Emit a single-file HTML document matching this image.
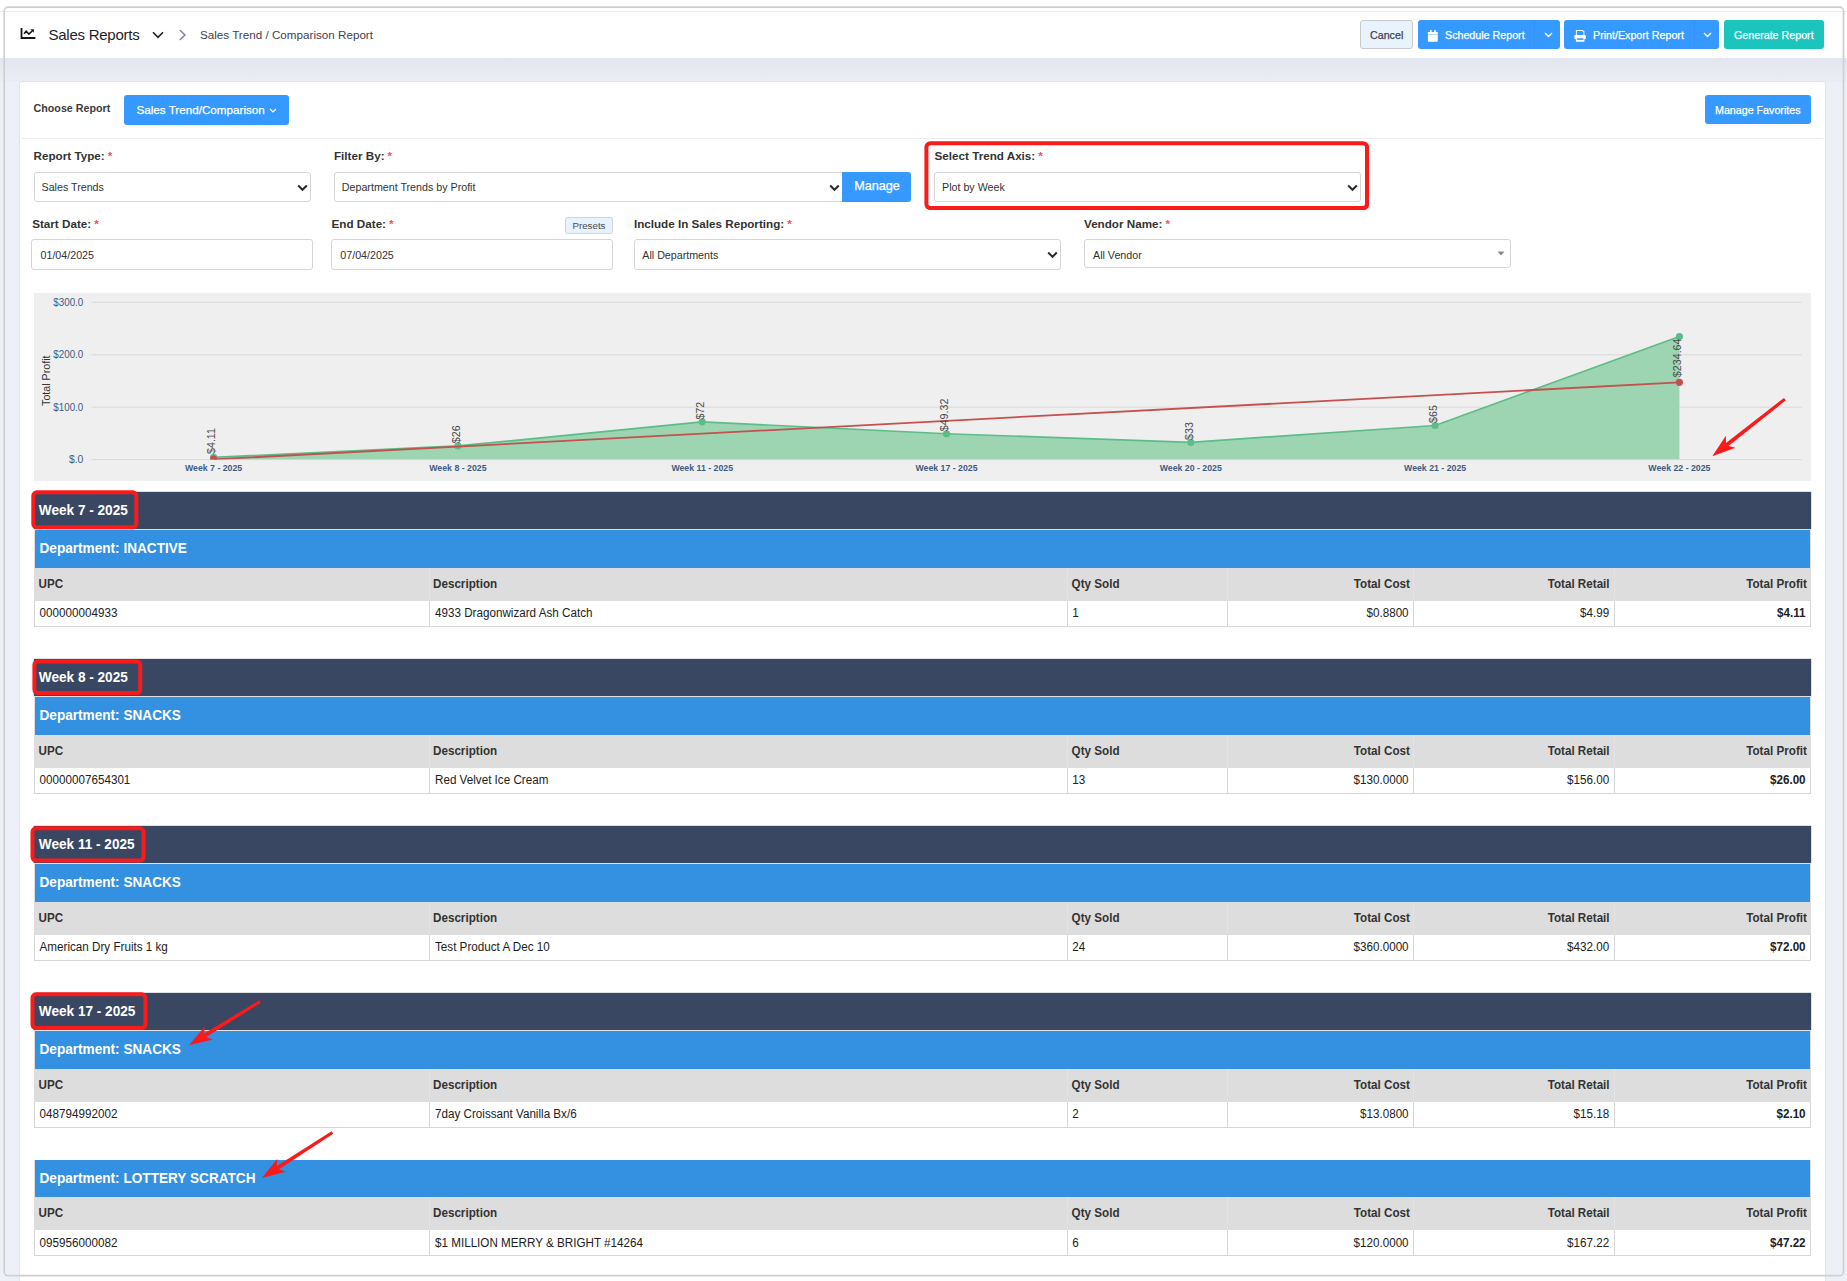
<!DOCTYPE html>
<html><head><meta charset="utf-8">
<style>
*{box-sizing:border-box;margin:0;padding:0}
html,body{width:1847px;height:1281px;overflow:hidden;background:#fff;font-family:"Liberation Sans",sans-serif;color:#3F4254}
.a{position:absolute}
.t{position:absolute;white-space:nowrap;line-height:1}
#topline{left:0;top:11px;width:1847px;height:1px;background:#E9EBF1}
#bg{left:0;top:58px;width:1847px;height:1223px;background:#EEF0F8}
#bgshade{left:0;top:58px;width:1847px;height:24px;background:linear-gradient(#E4E6EF,#EBEDF5)}
#card{left:19px;top:81px;width:1807px;height:1210px;background:#fff;border:1px solid #E2E4EA;border-radius:3px}
#frame{left:4px;top:7px;width:1840px;height:1270px;border:2px solid #D2D0D0;border-radius:3px}
.btn{position:absolute;border-radius:3px;color:#fff;font-size:10.69px;white-space:nowrap;line-height:1;-webkit-text-stroke:0.25px currentColor}
.lbl{position:absolute;white-space:nowrap;font-size:11.66px;font-weight:700;color:#333;line-height:1}
.lbl b{color:#F64E60;font-weight:700;margin-left:3px}
.inp{position:absolute;border:1px solid #D5D5D5;border-radius:3px;background:#fff;font-size:10.69px;color:#333;white-space:nowrap;line-height:1}
.inp span{position:absolute;left:7px;top:10px}
.chev{position:absolute;width:12px;height:8px}
</style></head><body>
<div class="a" id="topline"></div>
<div class="a" id="bg"></div>
<div class="a" id="bgshade"></div>
<div class="a" id="card"></div>

<!-- header -->
<svg class="a" style="left:19px;top:27px" width="18" height="13" viewBox="0 0 18 13">
 <path d="M2.5 1 V11 H16.4" fill="none" stroke="#151515" stroke-width="1.8"/>
 <path d="M5.1 6.7 L7.1 4.3 L9.9 7.1 L13.2 4" fill="none" stroke="#151515" stroke-width="1.6"/>
 <path d="M11.3 2.2 H14.9 V5.8 Z" fill="#151515"/>
</svg>
<div class="t" style="left:48.5px;top:26.5px;font-size:15px;letter-spacing:-0.25px;color:#1E1E2D">Sales Reports</div>
<svg class="a" style="left:152px;top:31px" width="12" height="8" viewBox="0 0 12 8"><path d="M1 1.2 L6 6.3 L11 1.2" fill="none" stroke="#1E1E2D" stroke-width="1.6"/></svg>
<svg class="a" style="left:178px;top:29px" width="9" height="12" viewBox="0 0 9 12"><path d="M1.8 1 L7 6 L1.8 11" fill="none" stroke="#7E8299" stroke-width="1.4"/></svg>
<div class="t" style="left:200px;top:28.5px;font-size:11.66px;color:#3F4254">Sales Trend / Comparison Report</div>

<div class="btn" style="left:1360px;top:20px;width:53px;height:29px;background:#E8F3FD;border:1px solid #C9C9C9;color:#3F4254"><span class="t" style="left:9px;top:9px">Cancel</span></div>
<div class="btn" style="left:1418px;top:20px;width:142px;height:29px;background:#3699FF">
 <svg class="a" style="left:9px;top:10px" width="12" height="12" viewBox="0 0 12 12"><rect x="3" y="0.1" width="1.6" height="2.5" fill="#fff"/><rect x="7.2" y="0.1" width="1.6" height="2.5" fill="#fff"/><rect x="0.9" y="1.9" width="9.9" height="2.2" rx="0.6" fill="#fff"/><rect x="0.9" y="4.1" width="9.9" height="0.8" fill="#E6EFFB"/><path d="M0.9 4.9 H10.8 V10.8 Q10.8 11.8 9.8 11.8 H1.9 Q0.9 11.8 0.9 10.8 Z" fill="#fff"/></svg>
 <span class="t" style="left:27px;top:9.5px">Schedule Report</span>
 <div class="a" style="left:116px;top:0;width:1px;height:29px;background:#3492F5"></div>
 <svg class="a" style="left:126px;top:12px" width="9" height="6" viewBox="0 0 9 6"><path d="M1 1 L4.5 4.5 L8 1" fill="none" stroke="#fff" stroke-width="1.5"/></svg>
</div>
<div class="btn" style="left:1564px;top:20px;width:155px;height:29px;background:#3699FF">
 <svg class="a" style="left:10px;top:10px" width="12" height="12" viewBox="0 0 12 12"><path d="M1.9 0.1 H8.9 L10.4 1.6 V5 H1.9 Z" fill="#fff"/><path d="M2.85 1.05 H8.4 L9.45 2.1 V5 H2.85 Z" fill="#3699FF"/><rect x="0.3" y="5" width="11.5" height="4.2" rx="1.3" fill="#fff"/><rect x="1.9" y="7.8" width="8.5" height="4" rx="0.5" fill="#fff"/><rect x="2.85" y="8.3" width="6.6" height="1.6" fill="#3699FF"/></svg>
 <span class="t" style="left:29px;top:9.5px">Print/Export Report</span>
 <div class="a" style="left:130px;top:0;width:1px;height:29px;background:#3492F5"></div>
 <svg class="a" style="left:139px;top:12px" width="9" height="6" viewBox="0 0 9 6"><path d="M1 1 L4.5 4.5 L8 1" fill="none" stroke="#fff" stroke-width="1.5"/></svg>
</div>
<div class="btn" style="left:1724px;top:20px;width:100px;height:29px;background:#1BC5BD"><span class="t" style="left:10px;top:9.5px">Generate Report</span></div>

<!-- card header -->
<div class="t" style="left:33.6px;top:102.5px;font-size:10.69px;font-weight:700;color:#3A3A3A">Choose Report</div>
<div class="btn" style="left:124px;top:95px;width:165px;height:29.5px;background:#3699FF;font-size:11.66px">
 <span class="t" style="left:12.5px;top:9px">Sales Trend/Comparison</span>
 <svg class="a" style="left:145px;top:12.5px" width="8" height="5" viewBox="0 0 8 5"><path d="M1 1 L4 4 L7 1" fill="none" stroke="#fff" stroke-width="1.2"/></svg>
</div>
<div class="btn" style="left:1705px;top:95px;width:106px;height:28.5px;background:#3699FF"><span class="t" style="left:10px;top:9.5px">Manage Favorites</span></div>
<div class="a" style="left:22px;top:138px;width:1801px;height:1px;background:#EBEDF3"></div>

<!-- FORM -->
<div class="lbl" style="left:33.6px;top:149.9px">Report Type:<b>*</b></div>
<div class="inp" style="left:34px;top:172px;width:277px;height:30px"><span style="left:6.5px;top:9.3px">Sales Trends</span>
 <svg class="a" style="left:262px;top:11px" width="11" height="8" viewBox="0 0 11 8"><path d="M1.2 1.5 L5.5 5.8 L9.8 1.5" fill="none" stroke="#2B2B2B" stroke-width="2"/></svg></div>
<div class="lbl" style="left:334px;top:149.9px">Filter By:<b>*</b></div>
<div class="inp" style="left:334px;top:172px;width:509px;height:30px;border-radius:3px 0 0 3px"><span style="left:6.8px;top:9.3px">Department Trends by Profit</span>
 <svg class="a" style="left:494px;top:11px" width="11" height="8" viewBox="0 0 11 8"><path d="M1.2 1.5 L5.5 5.8 L9.8 1.5" fill="none" stroke="#2B2B2B" stroke-width="2"/></svg></div>
<div class="btn" style="left:842px;top:172px;width:69px;height:30px;background:#3699FF;border-radius:0 3px 3px 0;font-size:12.64px"><span class="t" style="left:12.2px;top:7.9px">Manage</span></div>

<div class="lbl" style="left:934.6px;top:149.9px">Select Trend Axis:<b>*</b></div>
<div class="inp" style="left:934px;top:172px;width:427px;height:30px"><span style="left:7px;top:9.3px">Plot by Week</span>
 <svg class="a" style="left:412px;top:11px" width="11" height="8" viewBox="0 0 11 8"><path d="M1.2 1.5 L5.5 5.8 L9.8 1.5" fill="none" stroke="#2B2B2B" stroke-width="2"/></svg></div>
<div class="a" style="left:925px;top:142px;width:444px;height:68px;border:3px solid #F01E23;border-radius:5px"></div>

<div class="lbl" style="left:32.2px;top:218.2px">Start Date:<b>*</b></div>
<div class="inp" style="left:31px;top:239.2px;width:282px;height:30.5px"><span style="left:8.5px;top:9.5px">01/04/2025</span></div>
<div class="lbl" style="left:331.6px;top:218.2px">End Date:<b>*</b></div>
<div class="a" style="left:565px;top:217px;width:48px;height:16.5px;background:#E7F2FC;border:1px solid #D3D3D3;border-radius:2.5px"><span class="t" style="left:6.5px;top:2.9px;font-size:9.72px;color:#4A4A4A">Presets</span></div>
<div class="inp" style="left:331px;top:239.2px;width:282px;height:30.5px"><span style="left:8.3px;top:9.5px">07/04/2025</span></div>
<div class="lbl" style="left:633.9px;top:218.2px">Include In Sales Reporting:<b>*</b></div>
<div class="inp" style="left:634px;top:239.2px;width:427px;height:30.5px"><span style="left:7.3px;top:9.5px">All Departments</span>
 <svg class="a" style="left:412px;top:11px" width="11" height="8" viewBox="0 0 11 8"><path d="M1.2 1.5 L5.5 5.8 L9.8 1.5" fill="none" stroke="#2B2B2B" stroke-width="2"/></svg></div>
<div class="lbl" style="left:1084px;top:218.2px">Vendor Name:<b>*</b></div>
<div class="inp" style="left:1084px;top:239.2px;width:427px;height:29px"><span style="left:8px;top:9.5px">All Vendor</span>
 <svg class="a" style="left:412px;top:11px" width="8" height="5" viewBox="0 0 8 5"><path d="M0.5 0.5 H7.5 L4 4.5 Z" fill="#888"/></svg></div>


<!-- CHART -->
<svg class="a" style="left:0;top:0" width="1847" height="1281" viewBox="0 0 1847 1281">
<defs><clipPath id="pc"><rect x="91.6" y="293" width="1710" height="166.6"/></clipPath></defs>
<rect x="34" y="293" width="1777" height="188" fill="#EFEFEF"/>
<rect x="91.6" y="459.10" width="1710" height="1" fill="#D9D9D9"/>
<text x="83.3" y="463.20" text-anchor="end" font-size="10.6" textLength="14.4" lengthAdjust="spacingAndGlyphs" fill="#3E5C85" font-family="Liberation Sans">$.0</text>
<rect x="91.6" y="406.67" width="1710" height="1" fill="#D9D9D9"/>
<text x="83.3" y="410.77" text-anchor="end" font-size="10.6" textLength="30" lengthAdjust="spacingAndGlyphs" fill="#3E5C85" font-family="Liberation Sans">$100.0</text>
<rect x="91.6" y="354.23" width="1710" height="1" fill="#D9D9D9"/>
<text x="83.3" y="358.33" text-anchor="end" font-size="10.6" textLength="30" lengthAdjust="spacingAndGlyphs" fill="#3E5C85" font-family="Liberation Sans">$200.0</text>
<rect x="91.6" y="301.80" width="1710" height="1" fill="#D9D9D9"/>
<text x="83.3" y="305.90" text-anchor="end" font-size="10.6" textLength="30" lengthAdjust="spacingAndGlyphs" fill="#3E5C85" font-family="Liberation Sans">$300.0</text>
<text transform="translate(50,380.7) rotate(-90)" text-anchor="middle" font-size="10.69" fill="#333" font-family="Liberation Sans">Total Profit</text>
<g clip-path="url(#pc)"><polygon points="213.6,459.6 213.6,457.44 457.9,445.97 702.2,421.85 946.5,433.74 1190.8,442.30 1435.1,425.52 1679.4,336.57 1679.4,459.6" fill="#9DD5B3"/>
<polyline points="213.6,457.44 457.9,445.97 702.2,421.85 946.5,433.74 1190.8,442.30 1435.1,425.52 1679.4,336.57" fill="none" stroke="#5CBD88" stroke-width="1.7"/>
<circle cx="213.6" cy="457.44" r="3.6" fill="#5CBD88"/>
<circle cx="457.9" cy="445.97" r="3.6" fill="#5CBD88"/>
<circle cx="702.2" cy="421.85" r="3.6" fill="#5CBD88"/>
<circle cx="946.5" cy="433.74" r="3.6" fill="#5CBD88"/>
<circle cx="1190.8" cy="442.30" r="3.6" fill="#5CBD88"/>
<circle cx="1435.1" cy="425.52" r="3.6" fill="#5CBD88"/>
<circle cx="1679.4" cy="336.57" r="3.6" fill="#5CBD88"/>
<line x1="213.6" y1="459.4" x2="1679.4" y2="382.3" stroke="#C4504F" stroke-width="1.8"/>
<circle cx="213.6" cy="459" r="3.6" fill="#C4504F"/>
<circle cx="1679.4" cy="382.3" r="3.6" fill="#C4504F"/></g>
<text x="213.6" y="471" text-anchor="middle" font-size="8.75" font-weight="700" fill="#3E5C85" font-family="Liberation Sans">Week 7 - 2025</text>
<text x="457.9" y="471" text-anchor="middle" font-size="8.75" font-weight="700" fill="#3E5C85" font-family="Liberation Sans">Week 8 - 2025</text>
<text x="702.2" y="471" text-anchor="middle" font-size="8.75" font-weight="700" fill="#3E5C85" font-family="Liberation Sans">Week 11 - 2025</text>
<text x="946.5" y="471" text-anchor="middle" font-size="8.75" font-weight="700" fill="#3E5C85" font-family="Liberation Sans">Week 17 - 2025</text>
<text x="1190.8" y="471" text-anchor="middle" font-size="8.75" font-weight="700" fill="#3E5C85" font-family="Liberation Sans">Week 20 - 2025</text>
<text x="1435.1" y="471" text-anchor="middle" font-size="8.75" font-weight="700" fill="#3E5C85" font-family="Liberation Sans">Week 21 - 2025</text>
<text x="1679.4" y="471" text-anchor="middle" font-size="8.75" font-weight="700" fill="#3E5C85" font-family="Liberation Sans">Week 22 - 2025</text>
<text transform="translate(215.4,454) rotate(-90)" text-anchor="start" font-size="10.69" fill="#4A4A4A" font-family="Liberation Sans">$4.11</text>
<text transform="translate(459.7,443.2) rotate(-90)" text-anchor="start" font-size="10.69" fill="#4A4A4A" font-family="Liberation Sans">$26</text>
<text transform="translate(704.0,419.6) rotate(-90)" text-anchor="start" font-size="10.69" fill="#4A4A4A" font-family="Liberation Sans">$72</text>
<text transform="translate(948.3,431.3) rotate(-90)" text-anchor="start" font-size="10.69" fill="#4A4A4A" font-family="Liberation Sans">$49.32</text>
<text transform="translate(1192.6,440) rotate(-90)" text-anchor="start" font-size="10.69" fill="#4A4A4A" font-family="Liberation Sans">$33</text>
<text transform="translate(1436.9,423) rotate(-90)" text-anchor="start" font-size="10.69" fill="#4A4A4A" font-family="Liberation Sans">$65</text>
<text transform="translate(1681.2,338.5) rotate(-90)" text-anchor="end" font-size="10.69" fill="#4A4A4A" font-family="Liberation Sans">$234.64</text>
</svg>

<style>
.week{position:absolute;left:34px;width:1777px;background:#3A4763;box-shadow:0 0 0 0.6px #C9CCD3}
.week .t{font-size:13.61px;font-weight:700;color:#fff;transform:scaleY(1.08);transform-origin:0 85%}
.dept{position:absolute;left:34px;width:1777px;background:#3490E0;border-left:1px solid #E2DDD8;border-right:1px solid #E2DDD8}
.dept .t{font-size:13.61px;font-weight:700;color:#fff;transform:scaleY(1.08);transform-origin:0 85%}
.colh{position:absolute;left:34px;width:1777px;background:#DDDDDD}
.colh .t{font-size:11.66px;font-weight:700;color:#333;transform:scaleY(1.1);transform-origin:0 85%}
.colh .t,.row .t{left:auto}
.row{position:absolute;left:34px;width:1777px;background:#fff;border:1px solid #D6D6D6;border-top:0}
.row .t{font-size:11.66px;color:#222;transform:scaleY(1.1);transform-origin:0 85%}
.row i{position:absolute;top:0;width:1px;height:100%;background:#D6D6D6}
.colh i{position:absolute;top:0;width:1px;height:100%;background:#E3E3E3}
</style>
<div class="week" style="top:492px;height:37.2px"><span class="t" style="left:4.8px;top:12.18px">Week 7 - 2025</span></div>
<div class="dept" style="top:530.20px;height:37.6px"><span class="t" style="left:4.5px;top:12.28px">Department: INACTIVE</span></div>
<div class="colh" style="top:567.80px;height:32.9px"><span class="t" style="left:4.5px;top:9.83px">UPC</span><span class="t" style="left:399px;top:9.83px">Description</span><span class="t" style="left:1037.6px;top:9.83px">Qty Sold</span><span class="t" style="right:401.1px;top:9.83px">Total Cost</span><span class="t" style="right:201.4px;top:9.83px">Total Retail</span><span class="t" style="right:4.1px;top:9.83px">Total Profit</span><i style="left:395.3px"></i><i style="left:1033.3px"></i><i style="left:1193.3px"></i><i style="left:1379.3px"></i><i style="left:1580.4px"></i></div>
<div class="row" style="top:600.70px;height:26.2px"><span class="t" style="left:4.6px;top:6.43px">000000004933</span><span class="t" style="left:400.0px;top:6.43px">4933 Dragonwizard Ash Catch</span><span class="t" style="left:1037.3px;top:6.43px">1</span><span class="t" style="right:401.4px;top:6.43px">$0.8800</span><span class="t" style="right:200.8px;top:6.43px">$4.99</span><span class="t" style="right:4.4px;top:6.43px;font-weight:700">$4.11</span><i style="left:394.3px"></i><i style="left:1032.3px"></i><i style="left:1192.3px"></i><i style="left:1378.3px"></i><i style="left:1579.4px"></i></div>
<div class="week" style="top:659px;height:37.2px"><span class="t" style="left:4.8px;top:12.18px">Week 8 - 2025</span></div>
<div class="dept" style="top:697.20px;height:37.6px"><span class="t" style="left:4.5px;top:12.28px">Department: SNACKS</span></div>
<div class="colh" style="top:734.80px;height:32.9px"><span class="t" style="left:4.5px;top:9.83px">UPC</span><span class="t" style="left:399px;top:9.83px">Description</span><span class="t" style="left:1037.6px;top:9.83px">Qty Sold</span><span class="t" style="right:401.1px;top:9.83px">Total Cost</span><span class="t" style="right:201.4px;top:9.83px">Total Retail</span><span class="t" style="right:4.1px;top:9.83px">Total Profit</span><i style="left:395.3px"></i><i style="left:1033.3px"></i><i style="left:1193.3px"></i><i style="left:1379.3px"></i><i style="left:1580.4px"></i></div>
<div class="row" style="top:767.70px;height:26.2px"><span class="t" style="left:4.6px;top:6.43px">00000007654301</span><span class="t" style="left:400.0px;top:6.43px">Red Velvet Ice Cream</span><span class="t" style="left:1037.3px;top:6.43px">13</span><span class="t" style="right:401.4px;top:6.43px">$130.0000</span><span class="t" style="right:200.8px;top:6.43px">$156.00</span><span class="t" style="right:4.4px;top:6.43px;font-weight:700">$26.00</span><i style="left:394.3px"></i><i style="left:1032.3px"></i><i style="left:1192.3px"></i><i style="left:1378.3px"></i><i style="left:1579.4px"></i></div>
<div class="week" style="top:826px;height:37.2px"><span class="t" style="left:4.8px;top:12.18px">Week 11 - 2025</span></div>
<div class="dept" style="top:864.20px;height:37.6px"><span class="t" style="left:4.5px;top:12.28px">Department: SNACKS</span></div>
<div class="colh" style="top:901.80px;height:32.9px"><span class="t" style="left:4.5px;top:9.83px">UPC</span><span class="t" style="left:399px;top:9.83px">Description</span><span class="t" style="left:1037.6px;top:9.83px">Qty Sold</span><span class="t" style="right:401.1px;top:9.83px">Total Cost</span><span class="t" style="right:201.4px;top:9.83px">Total Retail</span><span class="t" style="right:4.1px;top:9.83px">Total Profit</span><i style="left:395.3px"></i><i style="left:1033.3px"></i><i style="left:1193.3px"></i><i style="left:1379.3px"></i><i style="left:1580.4px"></i></div>
<div class="row" style="top:934.70px;height:26.2px"><span class="t" style="left:4.6px;top:6.43px">American Dry Fruits 1 kg</span><span class="t" style="left:400.0px;top:6.43px">Test Product A Dec 10</span><span class="t" style="left:1037.3px;top:6.43px">24</span><span class="t" style="right:401.4px;top:6.43px">$360.0000</span><span class="t" style="right:200.8px;top:6.43px">$432.00</span><span class="t" style="right:4.4px;top:6.43px;font-weight:700">$72.00</span><i style="left:394.3px"></i><i style="left:1032.3px"></i><i style="left:1192.3px"></i><i style="left:1378.3px"></i><i style="left:1579.4px"></i></div>
<div class="week" style="top:993px;height:37.2px"><span class="t" style="left:4.8px;top:12.18px">Week 17 - 2025</span></div>
<div class="dept" style="top:1031.20px;height:37.6px"><span class="t" style="left:4.5px;top:12.28px">Department: SNACKS</span></div>
<div class="colh" style="top:1068.80px;height:32.9px"><span class="t" style="left:4.5px;top:9.83px">UPC</span><span class="t" style="left:399px;top:9.83px">Description</span><span class="t" style="left:1037.6px;top:9.83px">Qty Sold</span><span class="t" style="right:401.1px;top:9.83px">Total Cost</span><span class="t" style="right:201.4px;top:9.83px">Total Retail</span><span class="t" style="right:4.1px;top:9.83px">Total Profit</span><i style="left:395.3px"></i><i style="left:1033.3px"></i><i style="left:1193.3px"></i><i style="left:1379.3px"></i><i style="left:1580.4px"></i></div>
<div class="row" style="top:1101.70px;height:26.2px"><span class="t" style="left:4.6px;top:6.43px">048794992002</span><span class="t" style="left:400.0px;top:6.43px">7day Croissant Vanilla Bx/6</span><span class="t" style="left:1037.3px;top:6.43px">2</span><span class="t" style="right:401.4px;top:6.43px">$13.0800</span><span class="t" style="right:200.8px;top:6.43px">$15.18</span><span class="t" style="right:4.4px;top:6.43px;font-weight:700">$2.10</span><i style="left:394.3px"></i><i style="left:1032.3px"></i><i style="left:1192.3px"></i><i style="left:1378.3px"></i><i style="left:1579.4px"></i></div>
<div class="dept" style="top:1159.80px;height:37.6px"><span class="t" style="left:4.5px;top:12.28px">Department: LOTTERY SCRATCH</span></div>
<div class="colh" style="top:1197.40px;height:32.9px"><span class="t" style="left:4.5px;top:9.83px">UPC</span><span class="t" style="left:399px;top:9.83px">Description</span><span class="t" style="left:1037.6px;top:9.83px">Qty Sold</span><span class="t" style="right:401.1px;top:9.83px">Total Cost</span><span class="t" style="right:201.4px;top:9.83px">Total Retail</span><span class="t" style="right:4.1px;top:9.83px">Total Profit</span><i style="left:395.3px"></i><i style="left:1033.3px"></i><i style="left:1193.3px"></i><i style="left:1379.3px"></i><i style="left:1580.4px"></i></div>
<div class="row" style="top:1230.30px;height:26.2px"><span class="t" style="left:4.6px;top:6.43px">095956000082</span><span class="t" style="left:400.0px;top:6.43px">$1 MILLION MERRY &amp; BRIGHT #14264</span><span class="t" style="left:1037.3px;top:6.43px">6</span><span class="t" style="right:401.4px;top:6.43px">$120.0000</span><span class="t" style="right:200.8px;top:6.43px">$167.22</span><span class="t" style="right:4.4px;top:6.43px;font-weight:700">$47.22</span><i style="left:394.3px"></i><i style="left:1032.3px"></i><i style="left:1192.3px"></i><i style="left:1378.3px"></i><i style="left:1579.4px"></i></div>
<svg class="a" style="left:0;top:0" width="1847" height="1281" viewBox="0 0 1847 1281">
<rect x="926.40" y="143.30" width="440.60" height="64.70" rx="4.00" fill="none" stroke="#FA1A1A" stroke-width="4"/>
<rect x="33.30" y="492.30" width="103.00" height="35.00" rx="3.50" fill="none" stroke="#FA1A1A" stroke-width="4"/>
<rect x="34.40" y="661.50" width="105.80" height="31.50" rx="3.50" fill="none" stroke="#FA1A1A" stroke-width="4"/>
<rect x="32.50" y="828.30" width="111.00" height="32.30" rx="3.50" fill="none" stroke="#FA1A1A" stroke-width="4"/>
<rect x="32.50" y="994.30" width="112.90" height="33.70" rx="3.50" fill="none" stroke="#FA1A1A" stroke-width="4"/>
<polygon points="1712.30,456.20 1735.37,447.85 1728.47,446.03 1785.83,400.28 1783.97,397.92 1726.00,442.88 1725.85,435.74" fill="#FA1A1A"/>
<polygon points="189.00,1045.20 212.88,1039.55 206.23,1036.95 260.69,1002.88 259.11,1000.32 204.14,1033.54 204.81,1026.44" fill="#FA1A1A"/>
<polygon points="261.90,1177.90 285.66,1171.78 278.97,1169.31 333.21,1133.86 331.59,1131.34 276.80,1165.95 277.34,1158.83" fill="#FA1A1A"/>
</svg>
<svg class="a" style="left:0;top:0" width="1847" height="1281"><rect x="4.2" y="7.2" width="1839.3" height="1268.5" rx="4" fill="none" stroke="#D1CECE" stroke-width="1.7"/></svg>
</body></html>
